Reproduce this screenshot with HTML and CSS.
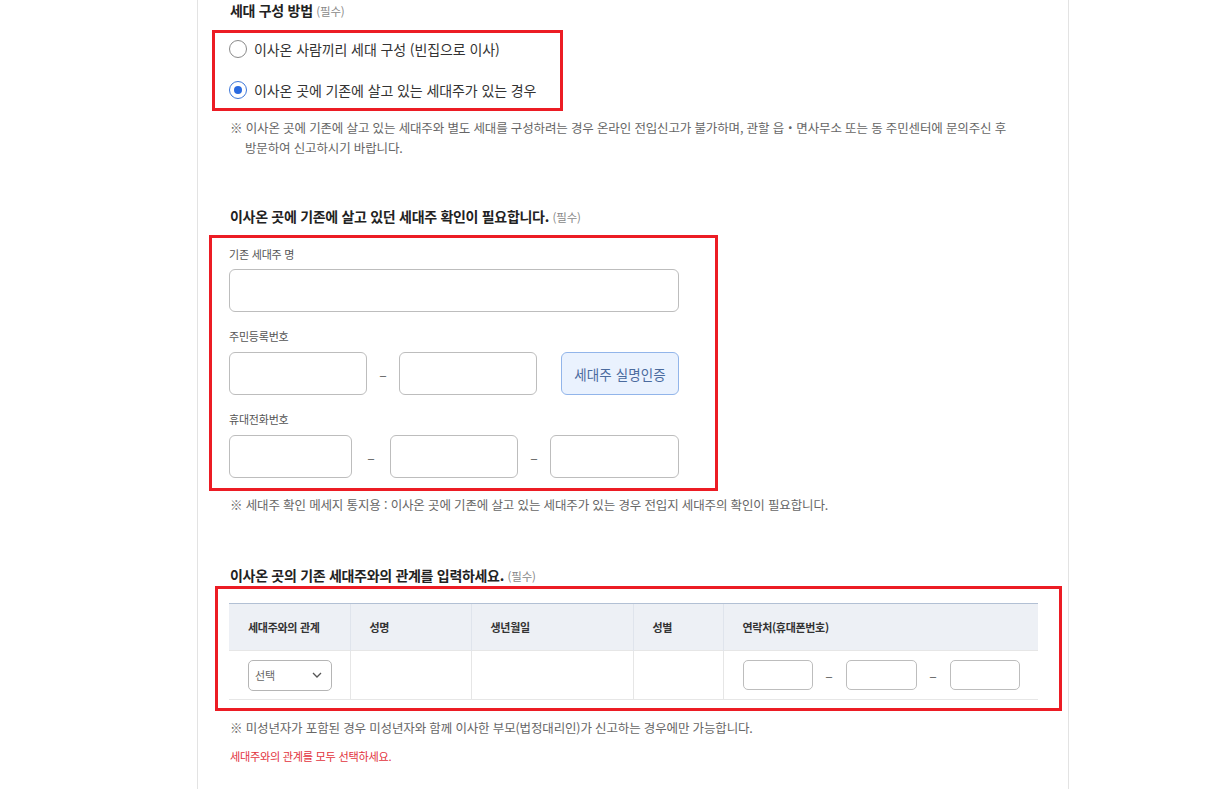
FILE: index.html
```html
<!DOCTYPE html>
<html lang="ko">
<head>
    <meta charset="UTF-8">
    <meta name="viewport" content="width=device-width, initial-scale=1.0">
    <link rel="stylesheet" href="styles.css">
</head>
<body>
    <div class="page">
        <h3 class="sec-title">세대 구성 방법 <span class="req">(필수)</span></h3>

        <div class="mark mark-radio">
            <label class="radio-row">
                <span class="radio"></span>
                <span>이사온 사람끼리 세대 구성 (빈집으로 이사)</span>
            </label>
            <label class="radio-row">
                <span class="radio checked"></span>
                <span>이사온 곳에 기존에 살고 있는 세대주가 있는 경우</span>
            </label>
        </div>

        <p class="note note-first">※ 이사온 곳에 기존에 살고 있는 세대주와 별도 세대를 구성하려는 경우 온라인 전입신고가 불가하며, 관할 읍・면사무소 또는 동 주민센터에 문의주신 후 방문하여 신고하시기 바랍니다.</p>

        <h3 class="sec-title sec-two">이사온 곳에 기존에 살고 있던 세대주 확인이 필요합니다. <span class="req">(필수)</span></h3>

        <div class="mark mark-form">
            <div class="field">
                <div class="field-label">기존 세대주 명</div>
                <div class="input input-full"></div>
            </div>
            <div class="field">
                <div class="field-label">주민등록번호</div>
                <div class="row-id">
                    <div class="input"></div>
                    <span class="dash">–</span>
                    <div class="input"></div>
                    <span></span>
                    <button class="btn-auth">세대주 실명인증</button>
                </div>
            </div>
            <div class="field">
                <div class="field-label">휴대전화번호</div>
                <div class="row-phone">
                    <div class="input"></div>
                    <span class="dash">–</span>
                    <div class="input"></div>
                    <span class="dash">–</span>
                    <div class="input"></div>
                </div>
            </div>
        </div>

        <p class="note note-second">※ 세대주 확인 메세지 통지용 : 이사온 곳에 기존에 살고 있는 세대주가 있는 경우 전입지 세대주의 확인이 필요합니다.</p>

        <h3 class="sec-title sec-three">이사온 곳의 기존 세대주와의 관계를 입력하세요. <span class="req">(필수)</span></h3>

        <div class="mark mark-table">
            <table class="rel-table">
                <colgroup>
                    <col style="width:121px">
                    <col style="width:121px">
                    <col style="width:162px">
                    <col style="width:90px">
                    <col>
                </colgroup>
                <thead>
                    <tr>
                        <th>세대주와의 관계</th>
                        <th>성명</th>
                        <th>생년월일</th>
                        <th>성별</th>
                        <th>연락처(휴대폰번호)</th>
                    </tr>
                </thead>
                <tbody>
                    <tr>
                        <td>
                            <div class="select">
                                <span>선택</span>
                                <svg width="10" height="6" viewBox="0 0 10 6"><path d="M1 1l4 4 4-4" fill="none" stroke="#555" stroke-width="1.3"/></svg>
                            </div>
                        </td>
                        <td></td>
                        <td></td>
                        <td></td>
                        <td>
                            <div class="tel">
                                <div class="input input-sm"></div>
                                <span class="dash">–</span>
                                <div class="input input-sm"></div>
                                <span class="dash">–</span>
                                <div class="input input-sm"></div>
                            </div>
                        </td>
                    </tr>
                </tbody>
            </table>
        </div>

        <p class="note note-third">※ 미성년자가 포함된 경우 미성년자와 함께 이사한 부모(법정대리인)가 신고하는 경우에만 가능합니다.</p>
        <p class="error">세대주와의 관계를 모두 선택하세요.</p>
    </div>
</body>
</html>
```

FILE: styles.css
```css
body {
    margin: 0;
    background: #fff;
    font-family: "Noto Sans CJK KR", "Noto Sans", sans-serif;
    color: #222;
}

.page {
    margin-left: 197px;
    width: 872px;
    min-height: 789px;
    box-sizing: border-box;
    padding-left: 32px;
    border-left: 1px solid #e3e3e3;
    border-right: 1px solid #e3e3e3;
    overflow: hidden;
}

.sec-title {
    margin: 0;
    height: 20px;
    font-size: 14px;
    line-height: 20px;
    font-weight: 700;
    color: #222;
    letter-spacing: -0.3px;
}

.req {
    font-size: 11.5px;
    line-height: 1;
    font-weight: 400;
    color: #888;
    letter-spacing: -0.2px;
}

.sec-two { margin-top: 48px; }
.sec-three { margin-top: 50px; }

/* red annotation boxes */
.mark {
    border: 3px solid #ec1c24;
    box-sizing: border-box;
}

.mark-radio {
    margin: 10px 0 0 -18px;
    width: 351px;
    padding: 6px 0 8px 14px;
}

.radio-row {
    display: flex;
    align-items: center;
    height: 20px;
    font-size: 14px;
    color: #333;
    letter-spacing: -0.1px;
}

.radio-row + .radio-row { margin-top: 21px; }

.radio {
    width: 18px;
    height: 18px;
    box-sizing: border-box;
    border: 1px solid #8a8a8a;
    border-radius: 50%;
    margin-right: 7px;
    flex: none;
    display: flex;
    align-items: center;
    justify-content: center;
}

.radio.checked { border-color: #3d77d9; }

.radio.checked::after {
    content: "";
    width: 8px;
    height: 8px;
    border-radius: 50%;
    background: #2a6ae0;
}

.note {
    margin: 0;
    font-size: 12.5px;
    line-height: 20px;
    color: #666;
    letter-spacing: -0.15px;
}

.note-first {
    margin-top: 7px;
    padding-left: 15px;
    text-indent: -15px;
    width: 770px;
}

.note-second { margin-top: 4px; }
.note-third { margin-top: 7px; }

.error {
    margin: 10px 0 0;
    font-size: 11.2px;
    line-height: 16px;
    color: #e2333d;
    letter-spacing: -0.3px;
}

.mark-form {
    margin: 9px 0 0 -21px;
    width: 509px;
    padding: 8px 0 10px 17px;
}

.field + .field { margin-top: 16px; }

.field-label {
    font-size: 11px;
    line-height: 16px;
    color: #555;
    letter-spacing: -0.2px;
    margin-bottom: 7px;
}

.field + .field .field-label { margin-bottom: 8px; }

.input {
    height: 43px;
    box-sizing: border-box;
    border: 1px solid #bdbdbd;
    border-radius: 6px;
    background: #fff;
}

.input-full { width: 450px; }

.row-id {
    display: grid;
    grid-template-columns: 138px 32px 138px 24px 118px;
    align-items: center;
}

.row-phone {
    display: grid;
    grid-template-columns: 123px 38px 128px 32px 129px;
    align-items: center;
}

.dash {
    text-align: center;
    font-size: 14px;
    color: #666;
}

.btn-auth {
    height: 43px;
    border: 1px solid #92b5ea;
    border-radius: 6px;
    background: #eaf2fe;
    color: #4b6b9e;
    font-family: inherit;
    font-size: 13.5px;
    letter-spacing: 0.1px;
    padding: 0;
}

.mark-table {
    margin: 1px 0 0 -15px;
    width: 847px;
    padding: 14px 0 8px 11px;
}

.rel-table {
    width: 809px;
    border-collapse: collapse;
    table-layout: fixed;
}

.rel-table th {
    height: 46px;
    background: #edf0f5;
    border-top: 1px solid #b2c0d4;
    border-left: 1px solid #dfe4ec;
    text-align: left;
    padding: 0 0 0 19px;
    font-size: 11px;
    font-weight: 700;
    color: #333;
    letter-spacing: -0.3px;
}

.rel-table td {
    height: 48px;
    border-top: 1px solid #e6e6e6;
    border-bottom: 1px solid #e6e6e6;
    border-left: 1px solid #e6e6e6;
    padding: 0 0 0 19px;
}

.rel-table th:first-child,
.rel-table td:first-child { border-left: none; }

.select {
    width: 84px;
    height: 31px;
    box-sizing: border-box;
    border: 1px solid #b5b5b5;
    border-radius: 5px;
    display: flex;
    align-items: center;
    justify-content: space-between;
    padding: 0 9px 0 6px;
    font-size: 11px;
    color: #666;
}

.tel {
    display: grid;
    grid-template-columns: 70px 33px 71px 33px 70px;
    align-items: center;
}

.input-sm {
    height: 30px;
    border-radius: 5px;
}
```
